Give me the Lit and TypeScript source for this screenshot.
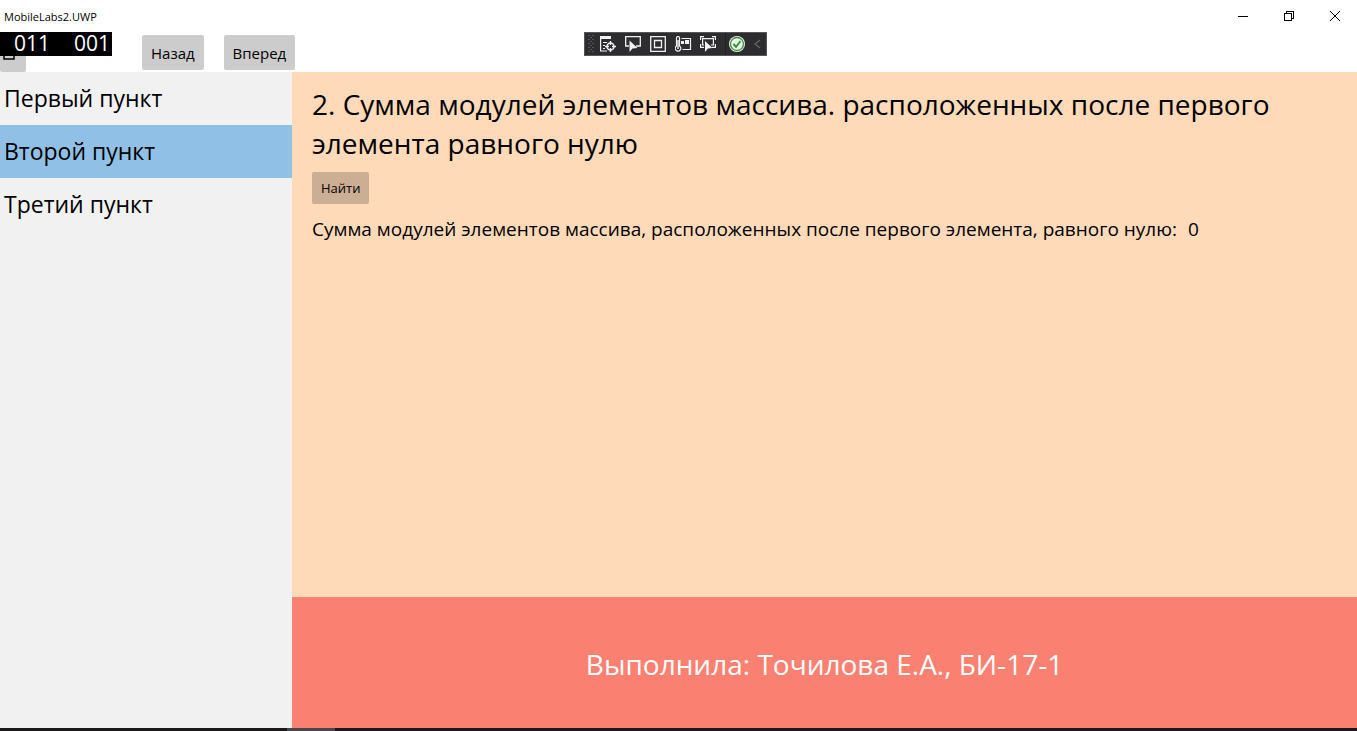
import { LitElement, html, css, svg } from "lit";
import { customElement, state } from "lit/decorators.js";

const debugIcons = [
  // Live visual tree
  svg`<path d="M0 0h11v3H0z" fill="#f1f1f1"/><path d="M.6 3v12H7M3 6.500h4M3 9.500h2M3 12.500h2" fill="none" stroke="#f1f1f1" stroke-width="1.2"/><circle cx="10.500" cy="10.500" r="3.500" fill="none" stroke="#f1f1f1" stroke-width="1.5"/><path d="M10.500 5v4M10.500 12v4M5 10.500h4M12 10.500h4" stroke="#f1f1f1" stroke-width="1.4"/>`,
  // Select element
  svg`<path d="M4 10H.7V.7h14.600V10H11" fill="none" stroke="#f1f1f1" stroke-width="1.3"/><path d="M4.500 4.500v11.500l3-3.500 5-.5z" fill="#f1f1f1"/>`,
  // Layout adorners
  svg`<path d="M.7 .7h14.600v14.600H.7z" fill="none" stroke="#f1f1f1" stroke-width="1.3"/><path d="M4.500 4.500h7v7h-7z" fill="none" stroke="#f1f1f1" stroke-width="1.3"/>`,
  // Performance thermometer
  svg`<path d="M1.500 10V2a1.500 1.500 0 0 1 3 0v8a2.800 2.800 0 1 1-3 0z" fill="none" stroke="#f1f1f1" stroke-width="1.200"/><path d="M3 4v9" stroke="#f1f1f1" stroke-width="1.4"/><path d="M6.500 2.500h9v11h-8" fill="none" stroke="#f1f1f1" stroke-width="1.200"/><path d="M6 5h3v3H6zM10 4h4v4h-4z" fill="#f1f1f1"/>`,
  // Track focused element
  svg`<path d="M.6 4V.6H4M12 .6h3.400V4M.6 8v3.400H4M12 11.400h3.400V8" fill="none" stroke="#f1f1f1" stroke-width="1.200"/><path d="M4 9H2.600V2.600h10.800V9H11" fill="none" stroke="#f1f1f1" stroke-width="1.200"/><path d="M5 5v11l3-3.500 4.500-.5z" fill="#f1f1f1"/>`,
];
const debugNames = ["Live Visual Tree", "Select Element", "Layout Adorners", "Hot Reload", "Track Focus"];

@customElement("app-root")
export class AppRoot extends LitElement {
  @state() selected = 1;

  static styles = css`
    :host {
      display: flex;
      flex-direction: column;
      height: 100vh;
      position: relative;
      overflow: hidden;
      background: #fff;
      color: #000;
      font-family: "Open Sans", "Noto Sans", sans-serif;
    }
    button {
      font: inherit;
      color: inherit;
      border: 0;
      margin: 0;
      padding: 0;
      background: none;
    }
    svg {
      display: block;
    }
    .titlebar {
      display: flex;
      justify-content: space-between;
      align-items: center;
      height: 32px;
      padding-left: 4px;
      font-size: 11px;
    }
    .window-buttons {
      display: flex;
    }
    .window-buttons button {
      display: grid;
      place-items: center;
      width: 46px;
      height: 32px;
      padding-left: 2px;
    }
    .toolbar {
      display: flex;
      align-items: center;
      gap: 20px;
      height: 40px;
    }
    .menu,
    .nav {
      background: #ccc;
      border-radius: 2px;
    }
    .menu {
      display: flex;
      align-items: center;
      width: 26px;
      height: 40px;
      padding-left: 3px;
      margin-right: 96px;
    }
    .nav {
      height: 35px;
      padding: 2px 9px 0;
      font-size: 15px;
    }
    .frame-counter {
      position: absolute;
      top: 32px;
      left: 0;
      display: flex;
      justify-content: flex-end;
      gap: 24px;
      box-sizing: border-box;
      width: 112px;
      height: 24px;
      padding-right: 2px;
      background: #000;
      color: #fff;
      font-size: 21px;
      line-height: 22px;
    }
    .debugbar {
      position: absolute;
      top: 32px;
      left: 43%;
      display: flex;
      align-items: center;
      box-sizing: border-box;
      width: 183px;
      height: 24px;
      padding: 0 3px;
      border: 1px solid #55555a;
      background: #2d2d30;
    }
    .debugbar button {
      width: 17px;
      margin-right: 8px;
    }
    .grip {
      margin-right: 6px;
    }
    .debugbar .status {
      box-sizing: border-box;
      width: 29px;
      height: 22px;
      padding-left: 3px;
      margin: 0;
      border-left: 1px solid #222224;
    }
    .debugbar .collapse {
      width: 8px;
      margin: 0;
    }
    .body {
      display: flex;
      flex: 1;
      min-height: 0;
    }
    .sidebar {
      width: 292px;
      background: #f1f1f1;
    }
    .item {
      display: block;
      width: 100%;
      height: 53px;
      padding: 0 4px 2px;
      font-size: 23px;
      text-align: left;
    }
    .item.selected {
      background: #91c0e7;
    }
    .main {
      display: flex;
      flex: 1;
      flex-direction: column;
      min-width: 0;
    }
    .page {
      flex: 1;
      padding: 13px 20px;
      background: #ffdab9;
    }
    h1 {
      margin: 0 0 9px;
      font-size: 28px;
      font-weight: 400;
      line-height: 39px;
    }
    .find {
      height: 32px;
      padding: 0 9px;
      border-radius: 2px;
      background: #ccae94;
      font-size: 13px;
    }
    .result {
      display: flex;
      gap: 11px;
      margin: 12px 0 0;
      font-size: 19px;
      line-height: 26px;
    }
    footer {
      padding: 48px 20px 44px;
      background: #fa8072;
      color: #fff;
      font-size: 28px;
      line-height: 39px;
      text-align: center;
    }
    .taskbar {
      height: 3px;
      padding-left: 287px;
      background: #1d191a;
    }
    .task {
      width: 48px;
      height: 3px;
      background: #4b4748;
    }
  `;

  render() {
    return html`
      <header class="titlebar">
        <span>MobileLabs2.UWP</span>
        <div class="window-buttons">
          <button aria-label="Свернуть">
            <svg width="10" height="10" shape-rendering="crispEdges"><path d="M0 5.500h10" stroke="#000" /></svg>
          </button>
          <button aria-label="Восстановить">
            <svg width="10" height="10" shape-rendering="crispEdges" fill="none" stroke="#000">
              <path d="M.5 2.500h7v7h-7zM2.500 2V.5h7v7H8" />
            </svg>
          </button>
          <button aria-label="Закрыть">
            <svg width="10" height="10" stroke="#000"><path d="M0 0l10 10M10 0L0 10" /></svg>
          </button>
        </div>
      </header>
      <nav class="toolbar">
        <button class="menu" aria-label="Меню">
          <svg width="12" height="16" fill="none" stroke="#000" stroke-width="1.500"><path d="M1 3h10v12H1z" /></svg>
        </button>
        <button class="nav">Назад</button>
        <button class="nav">Вперед</button>
      </nav>
      <div class="body">
        <aside class="sidebar">
          ${["Первый пункт", "Второй пункт", "Третий пункт"].map(
            (label, i) => html`<button
              class="item ${i === this.selected ? "selected" : ""}"
              @click=${() => (this.selected = i)}
            >${label}</button>`
          )}
        </aside>
        <div class="main">
          <main class="page">
            <h1>2. Сумма модулей элементов массива. расположенных после первого элемента равного нулю</h1>
            <button class="find">Найти</button>
            <p class="result">
              <span>Сумма модулей элементов массива, расположенных после первого элемента, равного нулю:</span>
              <output>0</output>
            </p>
          </main>
          <footer>Выполнила: Точилова Е.А., БИ-17-1</footer>
        </div>
      </div>
      <div class="taskbar"><div class="task"></div></div>
      <div class="frame-counter"><span>011</span><span>001</span></div>
      <div class="debugbar">
        <svg class="grip" width="6" height="18" fill="#55555a">
          ${[0, 4, 8, 12, 16].map((y) => svg`<path d="M0 ${y}h2v1H0zM4 ${y}h2v1H4zM2 ${y + 2}h2v1H2z" />`)}
        </svg>
        ${debugIcons.map(
          (icon, i) => html`<button aria-label=${debugNames[i]}><svg width="17" height="16">${icon}</svg></button>`
        )}
        <button class="status" aria-label="Hot Reload Available">
          <svg width="16" height="16">
            <circle cx="8" cy="8" r="8" fill="#f1f1f1" />
            <circle cx="8" cy="8" r="6.500" fill="#f1f1f1" stroke="#339933" stroke-width="1.300" />
            <path d="M4.500 8l2.500 3 4.500-6" fill="none" stroke="#339933" stroke-width="2" />
          </svg>
        </button>
        <button class="collapse" aria-label="Collapse">
          <svg width="7" height="10" fill="none" stroke="#66666a" stroke-width="1.300"><path d="M6 1L1 5l5 4" /></svg>
        </button>
      </div>
    `;
  }
}
